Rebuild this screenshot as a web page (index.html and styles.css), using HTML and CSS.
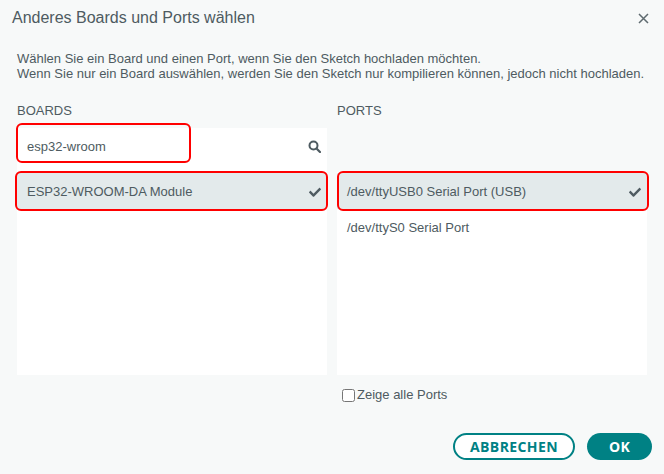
FILE: index.html
```html
<!DOCTYPE html>
<html lang="de">
<head>
<meta charset="utf-8">
<title>Anderes Boards und Ports wählen</title>
<link rel="stylesheet" href="styles.css">
</head>
<body>
<div class="dialog">
  <header class="head">
    <h1 class="title">Anderes Boards und Ports wählen</h1>
    <button class="close" aria-label="Schließen">
      <svg width="11" height="11" viewBox="0 0 11 11"><path d="M1 1L10 10M10 1L1 10" stroke="#5f6b70" stroke-width="1.5" fill="none"/></svg>
    </button>
  </header>
  <div class="content">
    <p class="desc">Wählen Sie ein Board und einen Port, wenn Sie den Sketch hochladen möchten.<br>Wenn Sie nur ein Board auswählen, werden Sie den Sketch nur kompilieren können, jedoch nicht hochladen.</p>
    <div class="cols">
      <section class="col">
        <div class="label">BOARDS</div>
        <div class="panel boards">
          <div class="search">
            <span class="value">esp32-wroom</span>
            <svg class="search-icon" width="13" height="13" viewBox="0 0 13 13"><circle cx="5.5" cy="5.5" r="4" stroke="#4e5b61" stroke-width="2" fill="none"/><path d="M8.5 8.5L12 12" stroke="#4e5b61" stroke-width="2.2" stroke-linecap="round"/></svg>
            <span class="mark mark-search"></span>
          </div>
          <ul class="list">
            <li class="item selected">
              <span>ESP32-WROOM-DA Module</span>
              <svg class="check" width="12" height="10" viewBox="0 0 512 420"><path d="M173.9 407.4l-166.4-166.4c-10-10-10-26.2 0-36.2l36.2-36.2c10-10 26.2-10 36.2 0L192 280.7 432.1 40.6c10-10 26.2-10 36.2 0l36.2 36.2c10 10 10 26.2 0 36.2l-294.4 294.4c-10 10-26.2 10-36.2 0z" fill="#4e5b61"/></svg>
              <span class="mark"></span>
            </li>
          </ul>
        </div>
      </section>
      <section class="col">
        <div class="label">PORTS</div>
        <div class="spacer"></div>
        <ul class="list panel ports">
          <li class="item selected">
            <span>/dev/ttyUSB0 Serial Port (USB)</span>
            <svg class="check" width="12" height="10" viewBox="0 0 512 420"><path d="M173.9 407.4l-166.4-166.4c-10-10-10-26.2 0-36.2l36.2-36.2c10-10 26.2-10 36.2 0L192 280.7 432.1 40.6c10-10 26.2-10 36.2 0l36.2 36.2c10 10 10 26.2 0 36.2l-294.4 294.4c-10 10-26.2 10-36.2 0z" fill="#4e5b61"/></svg>
            <span class="mark"></span>
          </li>
          <li class="item"><span>/dev/ttyS0 Serial Port</span></li>
        </ul>
        <label class="show-all"><input type="checkbox"><span>Zeige alle Ports</span></label>
      </section>
    </div>
  </div>
  <footer class="actions">
    <button class="btn secondary">ABBRECHEN</button>
    <button class="btn primary">OK</button>
  </footer>
</div>
</body>
</html>
```
FILE: styles.css
```css
* { box-sizing: border-box; }
html, body { margin: 0; padding: 0; }
body {
  background: #f7f9f9;
  font-family: "Liberation Sans", Arial, sans-serif;
  color: #4e5b61;
  width: 664px;
  height: 474px;
  overflow: hidden;
}
.dialog { display: flex; flex-direction: column; height: 474px; }
.head {
  height: 36px;
  display: flex;
  align-items: center;
  justify-content: space-between;
  padding: 0 15px 0 12px;
}
.title { margin: 0; font-size: 16px; font-weight: normal; line-height: 20px; }
.close {
  border: 0; background: none; padding: 0; width: 11px; height: 11px;
  display: flex; cursor: pointer;
}
.content { padding: 0 17px; }
.desc { margin: 15px 0 0; font-size: 13px; line-height: 15px; }
.cols { display: flex; gap: 10px; margin-top: 22px; }
.col { width: 310px; display: flex; flex-direction: column; }
.label { font-size: 13px; line-height: 15px; }
.panel { background: #fff; }
.boards { margin-top: 10px; height: 247px; }
.search {
  position: relative;
  height: 36px;
  display: flex;
  align-items: center;
  justify-content: space-between;
  padding: 0 6px 0 10px;
  font-size: 13px;
}
.search-icon { margin-top: 1px; }
.mark {
  position: absolute;
  border: 2px solid #ff0000;
  border-radius: 6px;
  pointer-events: none;
}
.mark-search { left: -1px; top: -5px; width: 175px; height: 40px; }
.list { list-style: none; margin: 0; padding: 0; }
.boards .list { margin-top: 9px; }
.item {
  position: relative;
  height: 36px;
  display: flex;
  align-items: center;
  justify-content: space-between;
  padding: 0 6px 0 10px;
  font-size: 13px;
}
.item.selected { background: #e3eaeb; }
.item .mark { left: -2px; right: -1px; top: -2px; bottom: -2px; }
.ports .item .mark { left: 0; right: -2px; }
.check { margin-top: 1px; }
.spacer { height: 44px; margin-top: 10px; }
.ports { height: 203px; }
.ports .item:first-child { margin-top: 1px; }
.show-all {
  display: flex;
  align-items: center;
  font-size: 13px;
  margin-top: 12px;
  margin-left: 4px;
  line-height: 16px;
}
.show-all input { margin: 0 2px 0 1px; width: 13px; height: 13px; }
.actions {
  display: flex;
  justify-content: flex-end;
  gap: 12px;
  padding: 0 12px 0 0;
  margin-top: auto;
  margin-bottom: 14px;
}
.btn {
  height: 27px;
  border-radius: 14px;
  font-family: "Open Sans", sans-serif;
  font-weight: 700;
  font-size: 14px;
  letter-spacing: 0.4px;
  cursor: pointer;
  line-height: 1;
}
.secondary { width: 122px; border: 2px solid #008184; color: #008184; background: #fff; }
.primary { width: 65px; border: 0; background: #008184; color: #fff; }
```
